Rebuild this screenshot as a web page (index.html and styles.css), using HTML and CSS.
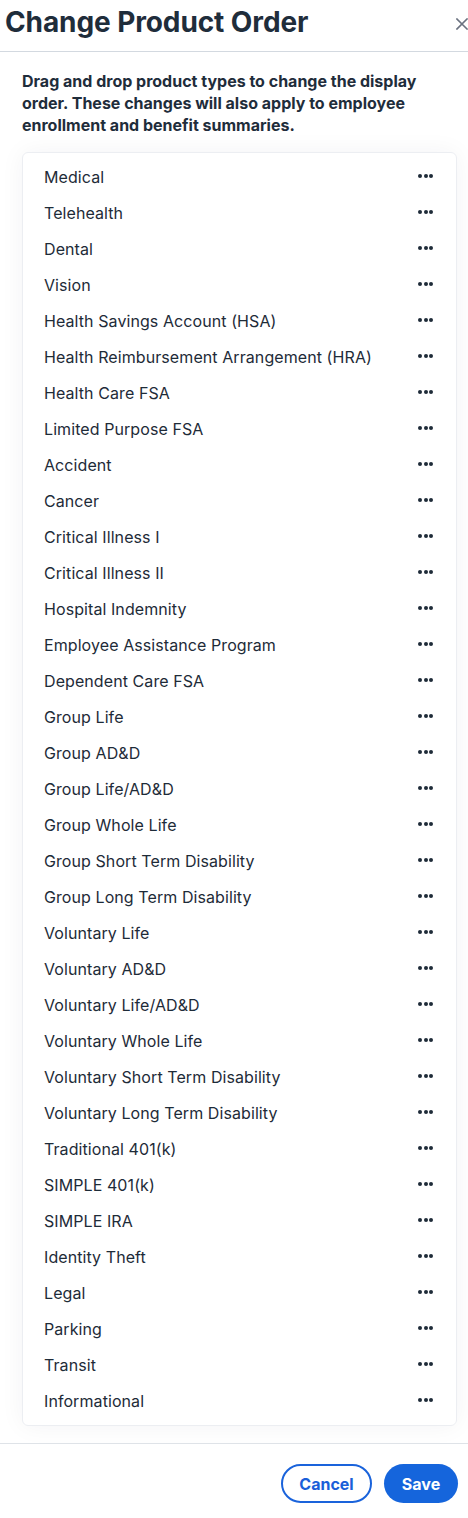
FILE: index.html
```html
<!DOCTYPE html>
<html>
<head>
    <title>Change Product Order</title>
    <link rel="stylesheet" href="styles.css">
</head>
<body>
    <div class="modal">
        <div class="modal-header">
            <h1>Change Product Order</h1>
            <button class="close-btn" aria-label="Close">
                <svg width="12" height="12" viewBox="0 0 12 12"><path d="M1 1L11 11M11 1L1 11" stroke="#6b7280" stroke-width="1.6" stroke-linecap="square"/></svg>
            </button>
        </div>

        <div class="modal-body">
            <p class="intro">Drag and drop product types to change the display order. These changes will also apply to employee enrollment and benefit summaries.</p>

            <ul class="product-list" id="product-list"></ul>
        </div>

        <div class="modal-footer">
            <button class="btn btn-outline">Cancel</button>
            <button class="btn btn-primary">Save</button>
        </div>
    </div>

    <script>
        const products = [
            'Medical', 'Telehealth', 'Dental', 'Vision',
            'Health Savings Account (HSA)', 'Health Reimbursement Arrangement (HRA)',
            'Health Care FSA', 'Limited Purpose FSA', 'Accident', 'Cancer',
            'Critical Illness I', 'Critical Illness II', 'Hospital Indemnity',
            'Employee Assistance Program', 'Dependent Care FSA', 'Group Life',
            'Group AD&D', 'Group Life/AD&D', 'Group Whole Life',
            'Group Short Term Disability', 'Group Long Term Disability',
            'Voluntary Life', 'Voluntary AD&D', 'Voluntary Life/AD&D',
            'Voluntary Whole Life', 'Voluntary Short Term Disability',
            'Voluntary Long Term Disability', 'Traditional 401(k)', 'SIMPLE 401(k)',
            'SIMPLE IRA', 'Identity Theft', 'Legal', 'Parking', 'Transit', 'Informational'
        ];

        const list = document.getElementById('product-list');
        products.forEach(function(name) {
            const li = document.createElement('li');
            li.className = 'product-item';
            const label = document.createElement('span');
            label.textContent = name;
            const dots = document.createElement('span');
            dots.className = 'dots';
            dots.innerHTML = '<i></i><i></i><i></i>';
            li.appendChild(label);
            li.appendChild(dots);
            list.appendChild(li);
        });
    </script>
</body>
</html>
```

FILE: styles.css
```css
body {
    margin: 0;
    font-family: Inter, "Noto Sans", Arial, sans-serif;
    color: #1e2b38;
    background: #fff;
    overflow: hidden;
}
.modal {
    width: 468px;
}
.modal-header {
    display: flex;
    justify-content: space-between;
    align-items: flex-start;
    border-bottom: 1px solid #d3d9e0;
    padding: 5px 0 0 5px;
    box-sizing: border-box;
    height: 52px;
}
.modal-header h1 {
    margin: 0;
    font-size: 28px;
    font-weight: 700;
    line-height: 34px;
    color: #1f2d3b;
    letter-spacing: -0.1px;
}
.close-btn {
    background: none;
    border: none;
    padding: 0;
    margin-top: 13px;
    width: 12px;
    height: 12px;
    cursor: pointer;
}
.modal-body {
    padding: 18px 11px 17px 22px;
}
.intro {
    margin: 0 0 16px;
    font-size: 16px;
    font-weight: 700;
    line-height: 22px;
    color: #1f2d3b;
}
.product-list {
    list-style: none;
    margin: 0;
    padding: 6px 0;
    border: 1px solid #eceef2;
    border-radius: 6px;
    box-shadow: 0 0 24px rgba(30, 40, 60, 0.05);
}
.product-item {
    height: 36px;
    display: flex;
    justify-content: space-between;
    align-items: center;
    padding: 0 23px 0 21px;
    font-size: 16px;
    letter-spacing: 0.08px;
    color: #1e2b38;
}
.dots {
    display: flex;
    gap: 1.5px;
    margin-top: -2px;
}
.dots i {
    width: 4px;
    height: 4px;
    border-radius: 50%;
    background: #1e2b38;
}
.modal-footer {
    border-top: 1px solid #dfe3e8;
    display: flex;
    justify-content: flex-end;
    gap: 12px;
    padding: 20px 10px 0 0;
}
.btn {
    height: 39px;
    border-radius: 20px;
    font-family: Inter, Arial, sans-serif;
    font-size: 16px;
    font-weight: 700;
    cursor: pointer;
    box-sizing: border-box;
}
.btn-outline {
    width: 91px;
    background: #fff;
    color: #1a5fd9;
    border: 2px solid #1a63db;
}
.btn-primary {
    width: 74px;
    background: #1565dc;
    color: #fff;
    border: none;
}
```
